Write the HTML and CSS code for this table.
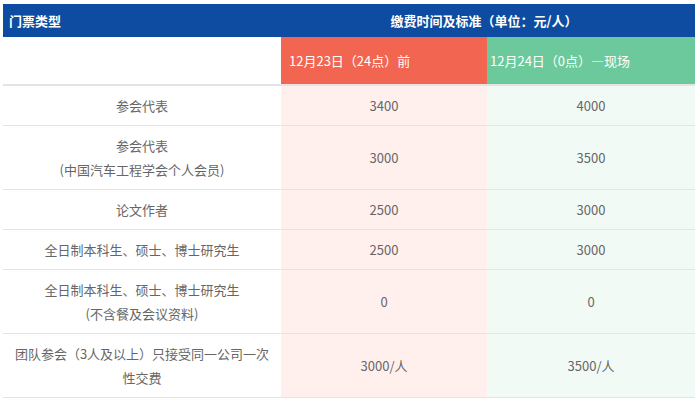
FILE: index.html
```html
<!DOCTYPE html>
<html lang="zh-CN">
<head>
<meta charset="utf-8">
<title>门票类型</title>
<link rel="stylesheet" href="styles.css">
</head>
<body>
<table class="fee-table">
  <colgroup>
    <col class="col-type">
    <col class="col-early">
    <col class="col-onsite">
  </colgroup>
  <thead>
    <tr class="head-main">
      <th class="th-type">门票类型</th>
      <th class="th-fee" colspan="2">缴费时间及标准（单位：元/人）</th>
    </tr>
    <tr class="head-sub">
      <th class="th-blank"></th>
      <th class="th-early">12月23日（24点）前</th>
      <th class="th-onsite">12月24日（0点）—现场</th>
    </tr>
  </thead>
  <tbody>
    <tr>
      <td class="c-type">参会代表</td>
      <td class="c-early">3400</td>
      <td class="c-onsite">4000</td>
    </tr>
    <tr>
      <td class="c-type">参会代表<br>(中国汽车工程学会个人会员)</td>
      <td class="c-early">3000</td>
      <td class="c-onsite">3500</td>
    </tr>
    <tr>
      <td class="c-type">论文作者</td>
      <td class="c-early">2500</td>
      <td class="c-onsite">3000</td>
    </tr>
    <tr>
      <td class="c-type">全日制本科生、硕士、博士研究生</td>
      <td class="c-early">2500</td>
      <td class="c-onsite">3000</td>
    </tr>
    <tr>
      <td class="c-type">全日制本科生、硕士、博士研究生<br>(不含餐及会议资料)</td>
      <td class="c-early">0</td>
      <td class="c-onsite">0</td>
    </tr>
    <tr>
      <td class="c-type">团队参会（3人及以上）只接受同一公司一次性交费</td>
      <td class="c-early">3000/人</td>
      <td class="c-onsite">3500/人</td>
    </tr>
  </tbody>
</table>
</body>
</html>
```

FILE: styles.css
```css
html, body {
  margin: 0;
  padding: 0;
  background: #ffffff;
}

body {
  padding: 4px 5px 0 3px;
  font-family: "Noto Sans CJK SC", "Noto Sans", sans-serif;
  font-size: 13px;
  color: #666666;
}

.fee-table {
  width: 692px;
  border-collapse: collapse;
  table-layout: fixed;
}

.col-type { width: 278px; }
.col-early { width: 206px; }
.col-onsite { width: 208px; }

.head-main th {
  background: #0d4ca1;
  color: #ffffff;
  font-weight: bold;
  height: 33px;
  padding: 0;
  line-height: 20px;
}

.th-type {
  text-align: left;
  padding-left: 6px !important;
}

.th-fee {
  text-align: center;
  padding-right: 8px !important;
}

.head-sub th {
  height: 47px;
  padding: 0;
  font-weight: normal;
  color: #ffffff;
  text-align: left;
  border-bottom: 2px solid #e4e4e4;
  line-height: 20px;
}

.th-blank { background: #ffffff; }

.th-early {
  background: #f26551;
  padding-left: 8px !important;
}

.th-onsite {
  background: #6cc99b;
  padding-left: 3px !important;
}

tbody td {
  padding: 8px 8px 7px;
  line-height: 24px;
  text-align: center;
  border-bottom: 1px solid #e4e4e4;
  vertical-align: middle;
}

.c-type { background: #ffffff; }
.c-early { background: #fff0ee; }
.c-onsite { background: #f2faf6; }
```
